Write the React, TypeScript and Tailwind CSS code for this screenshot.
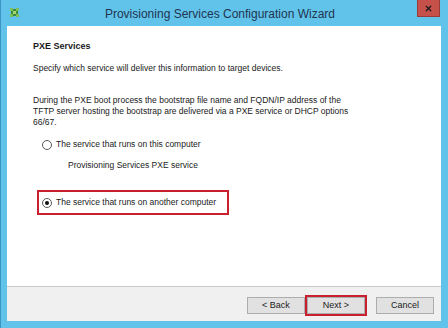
import { X } from 'lucide-react'

// Provisioning Services wizard — PXE page

function Radio({ checked }: { checked?: boolean }) {
  return (
    <span className="w-[10px] h-[10px] rounded-full border border-[#5a5a5a] bg-white flex items-center justify-center shrink-0">
      {checked && <span className="w-[4px] h-[4px] rounded-full bg-[#111]" />}
    </span>
  )
}

function WizButton({ label, highlight }: { label: string; highlight?: boolean }) {
  const btn = (
    <button
      type="button"
      className="w-[58px] h-[17px] bg-[#e1e1e1] border border-[#adadad] text-[9px] text-[#222] flex items-center justify-center"
    >
      {label}
    </button>
  )
  if (!highlight) return btn
  return <div className="border-2 border-[#c8202e] p-0">{btn}</div>
}

function AppIcon() {
  return (
    <svg width="9" height="9" viewBox="0 0 9 9">
      <rect x="1" y="1" width="7" height="7" fill="#3d8a3a" />
      <rect x="0" y="0" width="3" height="3" fill="#7fbf5a" />
      <rect x="6" y="0" width="3" height="3" fill="#7fbf5a" />
      <rect x="0" y="6" width="3" height="3" fill="#7fbf5a" />
      <rect x="6" y="6" width="3" height="3" fill="#7fbf5a" />
      <rect x="3" y="3" width="3" height="3" fill="#a6d66e" />
    </svg>
  )
}

export default function App() {
  return (
    <div
      className="w-[448px] h-[328px] bg-[#62c3ea] border-l border-[#3a94c4] flex flex-col overflow-hidden"
      style={{ fontFamily: '"Liberation Sans", Arial, sans-serif' }}
    >
      {/* title bar */}
      <div className="h-[26px] flex items-start shrink-0">
        <div className="w-[9px] h-[9px] mt-[8px] ml-[9px]">
          <AppIcon />
        </div>
        <div className="flex-1 text-center text-[12px] text-[#1f3550] pt-[5px] pl-[4px]">
          Provisioning Services Configuration Wizard
        </div>
        <div className="w-[23px] h-[17px] mr-[8px] bg-[#c6504a] border border-[#9c3a36] border-t-0 flex items-center justify-center">
          <X size={9} strokeWidth={3.5} color="#1a1a1a" />
        </div>
      </div>

      {/* body */}
      <div className="ml-[6px] mr-[7px] flex-1 flex flex-col">
        <div className="flex-1 bg-white text-[8.5px] text-[#1a1a1a] pl-[26px] pr-4 pt-[14px]">
          <div className="font-bold text-[9px] leading-[12px]">PXE Services</div>
          <div className="mt-[11px] leading-[11px]">
            Specify which service will deliver this information to target devices.
          </div>
          <div className="mt-[21px] leading-[11px] w-[330px]">
            During the PXE boot process the bootstrap file name and FQDN/IP address of the TFTP server
            hosting the bootstrap are delivered via a PXE service or DHCP options 66/67.
          </div>
          <div className="mt-[11px] ml-[9px] flex items-center gap-[4px] leading-[11px]">
            <Radio />
            <span>The service that runs on this computer</span>
          </div>
          <div className="mt-[10px] ml-[35px] leading-[11px]">Provisioning Services PXE service</div>
          <div className="mt-[19px] ml-[4px] w-[192px] h-[25px] border-2 border-[#c8202e] flex items-center gap-[4px] pl-[3px]">
            <Radio checked />
            <span className="leading-[11px]">The service that runs on another computer</span>
          </div>
        </div>
        <div className="h-[35px] bg-[#f0f0f0] border-t border-[#c9c9c9] flex items-center justify-end pr-[7px] pt-[3px] shrink-0">
          <WizButton label="< Back" />
          <WizButton label="Next >" highlight />
          <div className="w-[9px]" />
          <WizButton label="Cancel" />
        </div>
        <div className="h-[7px] shrink-0" />
      </div>
    </div>
  )
}
